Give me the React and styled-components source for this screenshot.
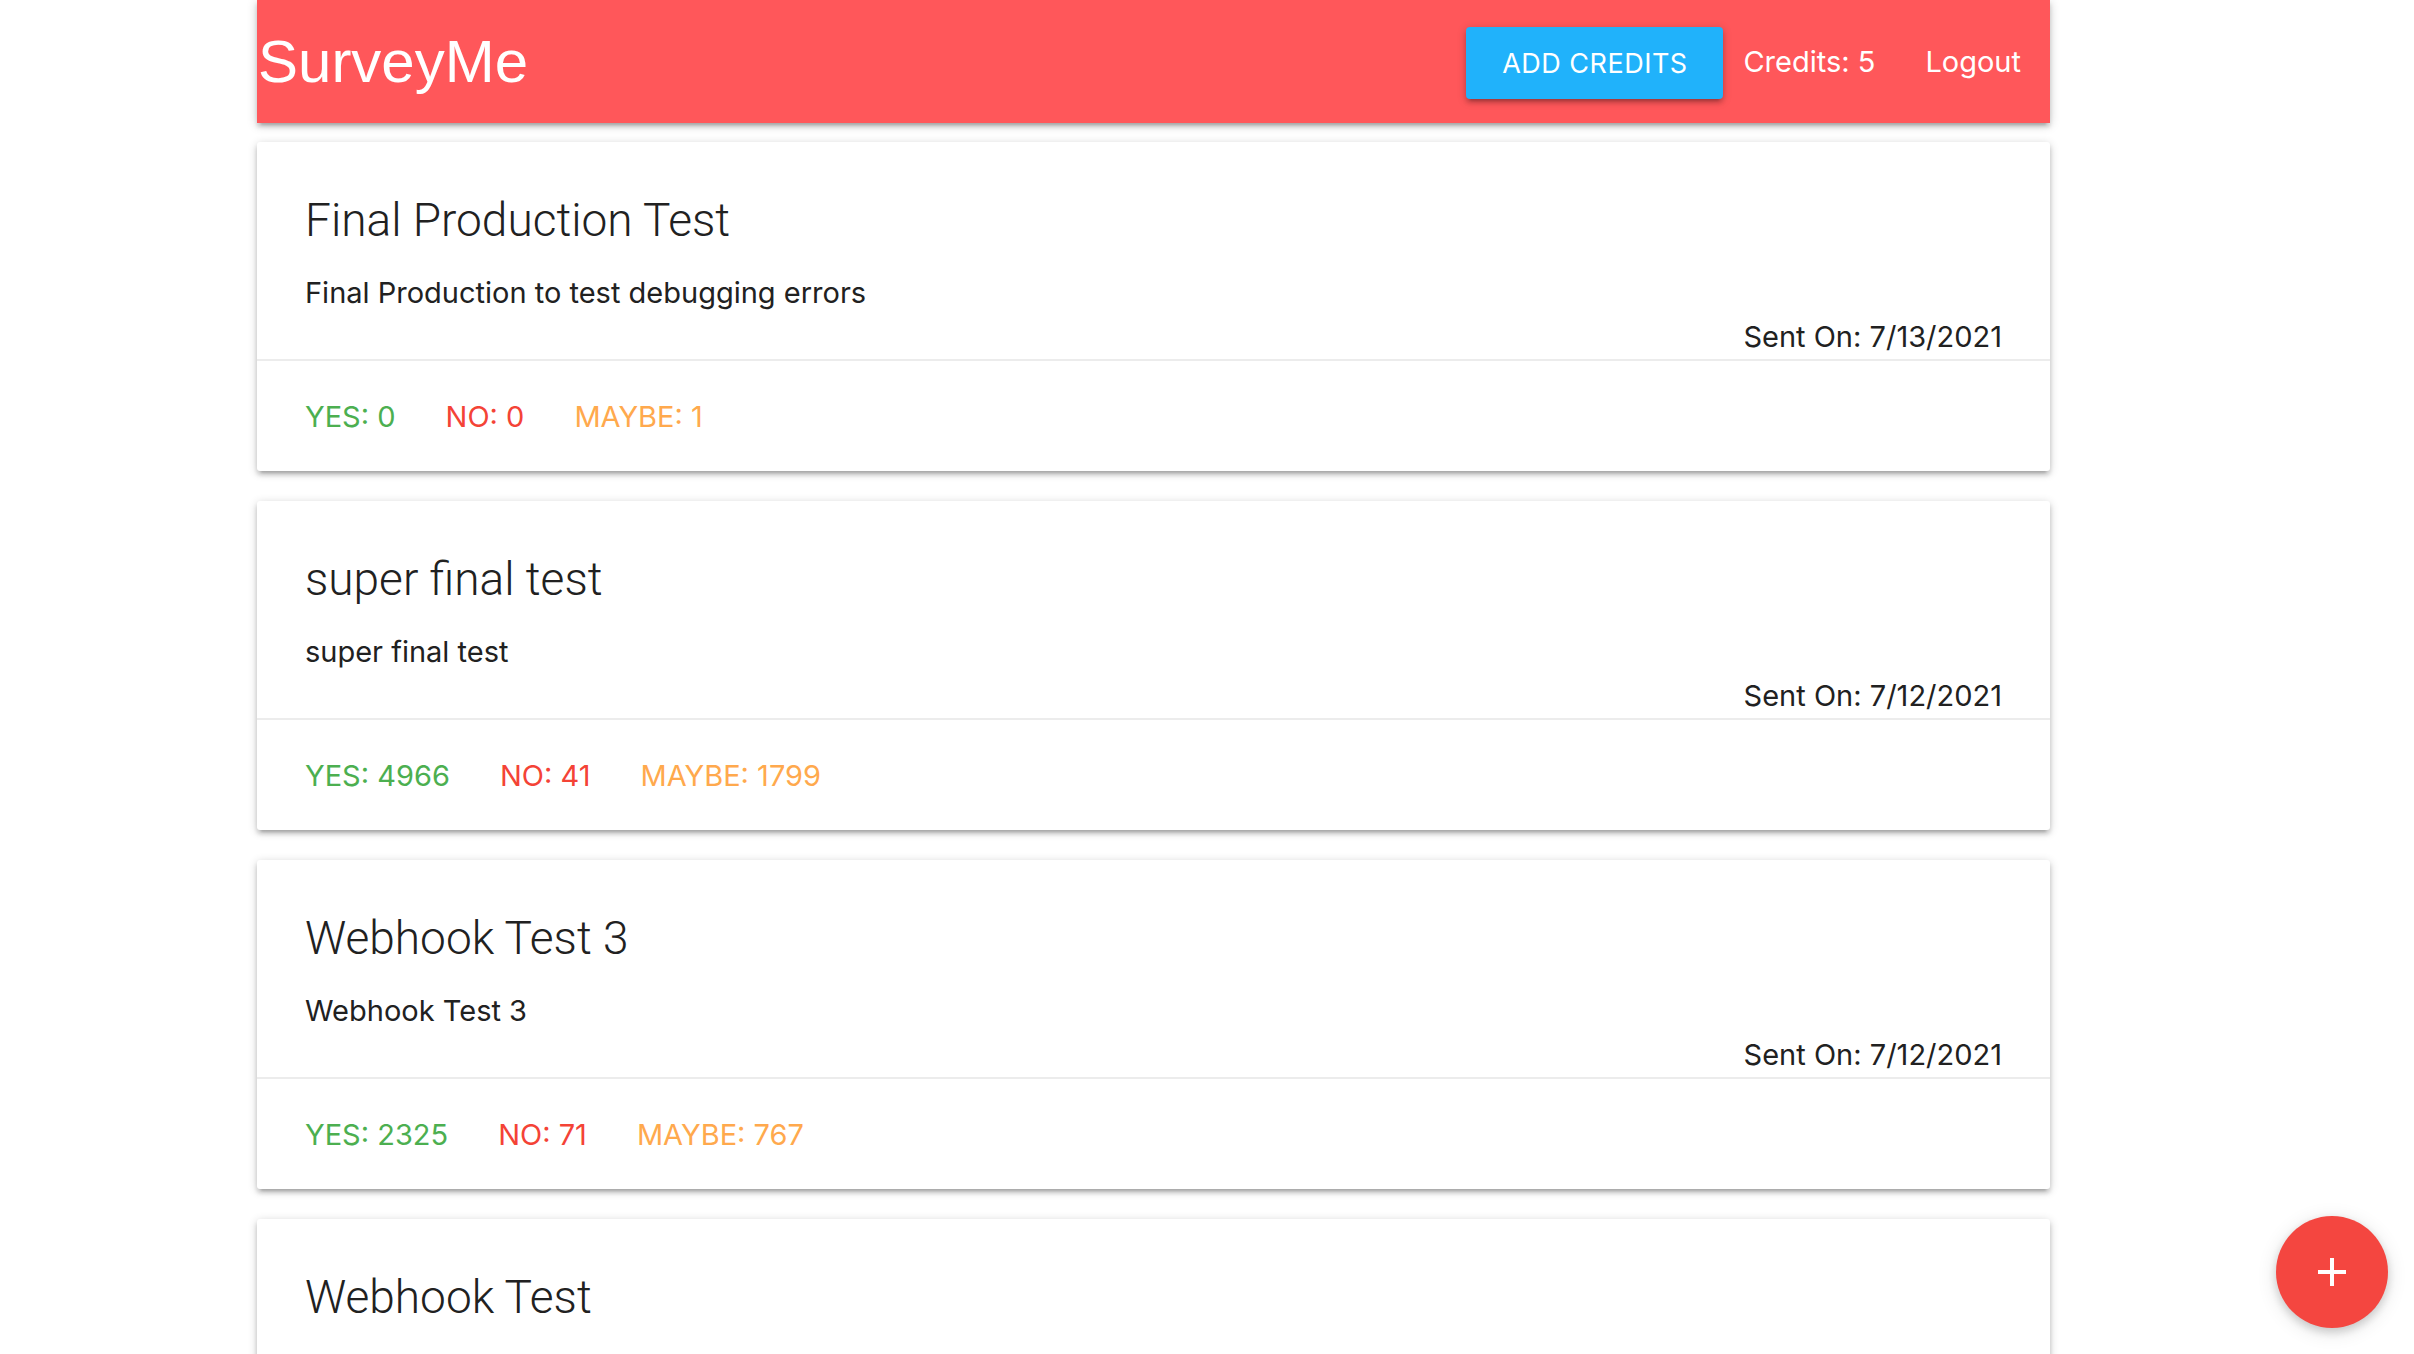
import React from "react";
import styled, { createGlobalStyle } from "styled-components";

const GlobalStyle = createGlobalStyle`
  html, body {
    margin: 0;
    padding: 0;
    background: #fff;
    overflow: hidden;
  }
  body {
    font-family: Inter, "Open Sans", "Liberation Sans", sans-serif;
    color: rgba(0, 0, 0, 0.87);
  }
`;

const Page = styled.div`
  width: 1793px;
  margin: 0 0 0 257px;
`;

const Nav = styled.nav`
  display: flex;
  align-items: center;
  height: 123px;
  background-color: #ff575a;
  box-shadow: 0 4px 4px 0 rgba(0, 0, 0, 0.14), 0 6px 2px -4px rgba(0, 0, 0, 0.12),
    0 2px 10px 0 rgba(0, 0, 0, 0.2);
  color: #fff;
`;

const Brand = styled.a`
  font-family: "Liberation Sans", Arial, sans-serif;
  font-size: 60px;
  line-height: 123px;
  color: #fff;
  text-decoration: none;
  margin-left: 1px;
`;

const NavRight = styled.ul`
  display: flex;
  align-items: center;
  list-style: none;
  margin: 0 0 0 auto;
  padding: 0;
  height: 100%;
`;

const NavItem = styled.li`
  display: flex;
  align-items: center;
  padding: ${(p) => p.$pad || "0 29px"};
  font-size: 29px;
  color: #fff;
`;

const CreditsButton = styled.button`
  height: 72px;
  width: 257px;
  margin-top: 2px;
  padding-top: 3px;
  border: none;
  border-radius: 4px;
  background-color: #20b2fb;
  color: #fff;
  font-family: Inter, "Liberation Sans", sans-serif;
  font-size: 27px;
  letter-spacing: 0.5px;
  text-transform: uppercase;
  box-shadow: 0 4px 4px 0 rgba(0, 0, 0, 0.14), 0 6px 2px -4px rgba(0, 0, 0, 0.12),
    0 2px 10px 0 rgba(0, 0, 0, 0.2);
  cursor: pointer;
`;

const List = styled.div`
  display: flex;
  flex-direction: column;
  gap: 30px;
  padding-top: 19px;
`;

const Card = styled.div`
  background: #fff;
  border-radius: 3px;
  box-shadow: 0 4px 4px 0 rgba(0, 0, 0, 0.14), 0 6px 2px -4px rgba(0, 0, 0, 0.12),
    0 2px 10px 0 rgba(0, 0, 0, 0.2);
`;

const CardContent = styled.div`
  padding: 48px 48px 0 48px;
`;

const CardTitle = styled.span`
  display: block;
  font-family: Roboto, Inter, sans-serif;
  font-weight: 300;
  font-size: 46px;
  line-height: 61px;
  color: #212121;
  margin-bottom: 20px;
`;

const Text = styled.p`
  margin: 0;
  font-size: 29px;
  line-height: 44px;
  color: #212121;
  text-align: ${(p) => (p.$right ? "right" : "left")};
`;

const CardAction = styled.div`
  display: flex;
  gap: 50px;
  border-top: 2px solid rgba(160, 160, 160, 0.2);
  padding: 32px 48px 30px;
  line-height: 48px;
`;

const Count = styled.span`
  font-size: 29px;
  color: ${(p) => p.$color};
`;

const Fab = styled.button`
  position: fixed;
  right: 26px;
  bottom: 26px;
  width: 112px;
  height: 112px;
  border-radius: 50%;
  border: none;
  background-color: #f44640;
  display: flex;
  align-items: center;
  justify-content: center;
  box-shadow: 0 4px 10px 0 rgba(0, 0, 0, 0.16), 0 4px 20px 0 rgba(0, 0, 0, 0.12);
  cursor: pointer;
`;

const surveys = [
  {
    title: "Final Production Test",
    body: "Final Production to test debugging errors",
    sent: "7/13/2021",
    yes: 0,
    no: 0,
    maybe: 1,
  },
  {
    title: "super final test",
    body: "super final test",
    sent: "7/12/2021",
    yes: 4966,
    no: 41,
    maybe: 1799,
  },
  {
    title: "Webhook Test 3",
    body: "Webhook Test 3",
    sent: "7/12/2021",
    yes: 2325,
    no: 71,
    maybe: 767,
  },
  {
    title: "Webhook Test",
    body: "Webhook Test",
    sent: "7/12/2021",
    yes: 12,
    no: 3,
    maybe: 5,
  },
];

function SurveyCard({ survey }) {
  return (
    <Card>
      <CardContent>
        <CardTitle>{survey.title}</CardTitle>
        <Text>{survey.body}</Text>
        <Text $right>Sent On: {survey.sent}</Text>
      </CardContent>
      <CardAction>
        <Count $color="#4caf50">YES: {survey.yes}</Count>
        <Count $color="#f44336">NO: {survey.no}</Count>
        <Count $color="#ffa94d">MAYBE: {survey.maybe}</Count>
      </CardAction>
    </Card>
  );
}

export default function App() {
  return (
    <>
      <GlobalStyle />
      <Page>
        <Nav>
          <Brand href="#">SurveyMe</Brand>
          <NavRight>
            <NavItem $pad="0 20px 0 0">
              <CreditsButton>Add Credits</CreditsButton>
            </NavItem>
            <NavItem $pad="0 25px 0 0">Credits: 5</NavItem>
            <NavItem $pad="0 29px 0 25px">Logout</NavItem>
          </NavRight>
        </Nav>
        <List>
          {surveys.map((s) => (
            <SurveyCard key={s.title} survey={s} />
          ))}
        </List>
      </Page>
      <Fab aria-label="new survey">
        <svg width="30" height="30" viewBox="0 0 30 30">
          <rect x="13" y="1" width="4" height="28" fill="#fff" />
          <rect x="1" y="13" width="28" height="4" fill="#fff" />
        </svg>
      </Fab>
    </>
  );
}
